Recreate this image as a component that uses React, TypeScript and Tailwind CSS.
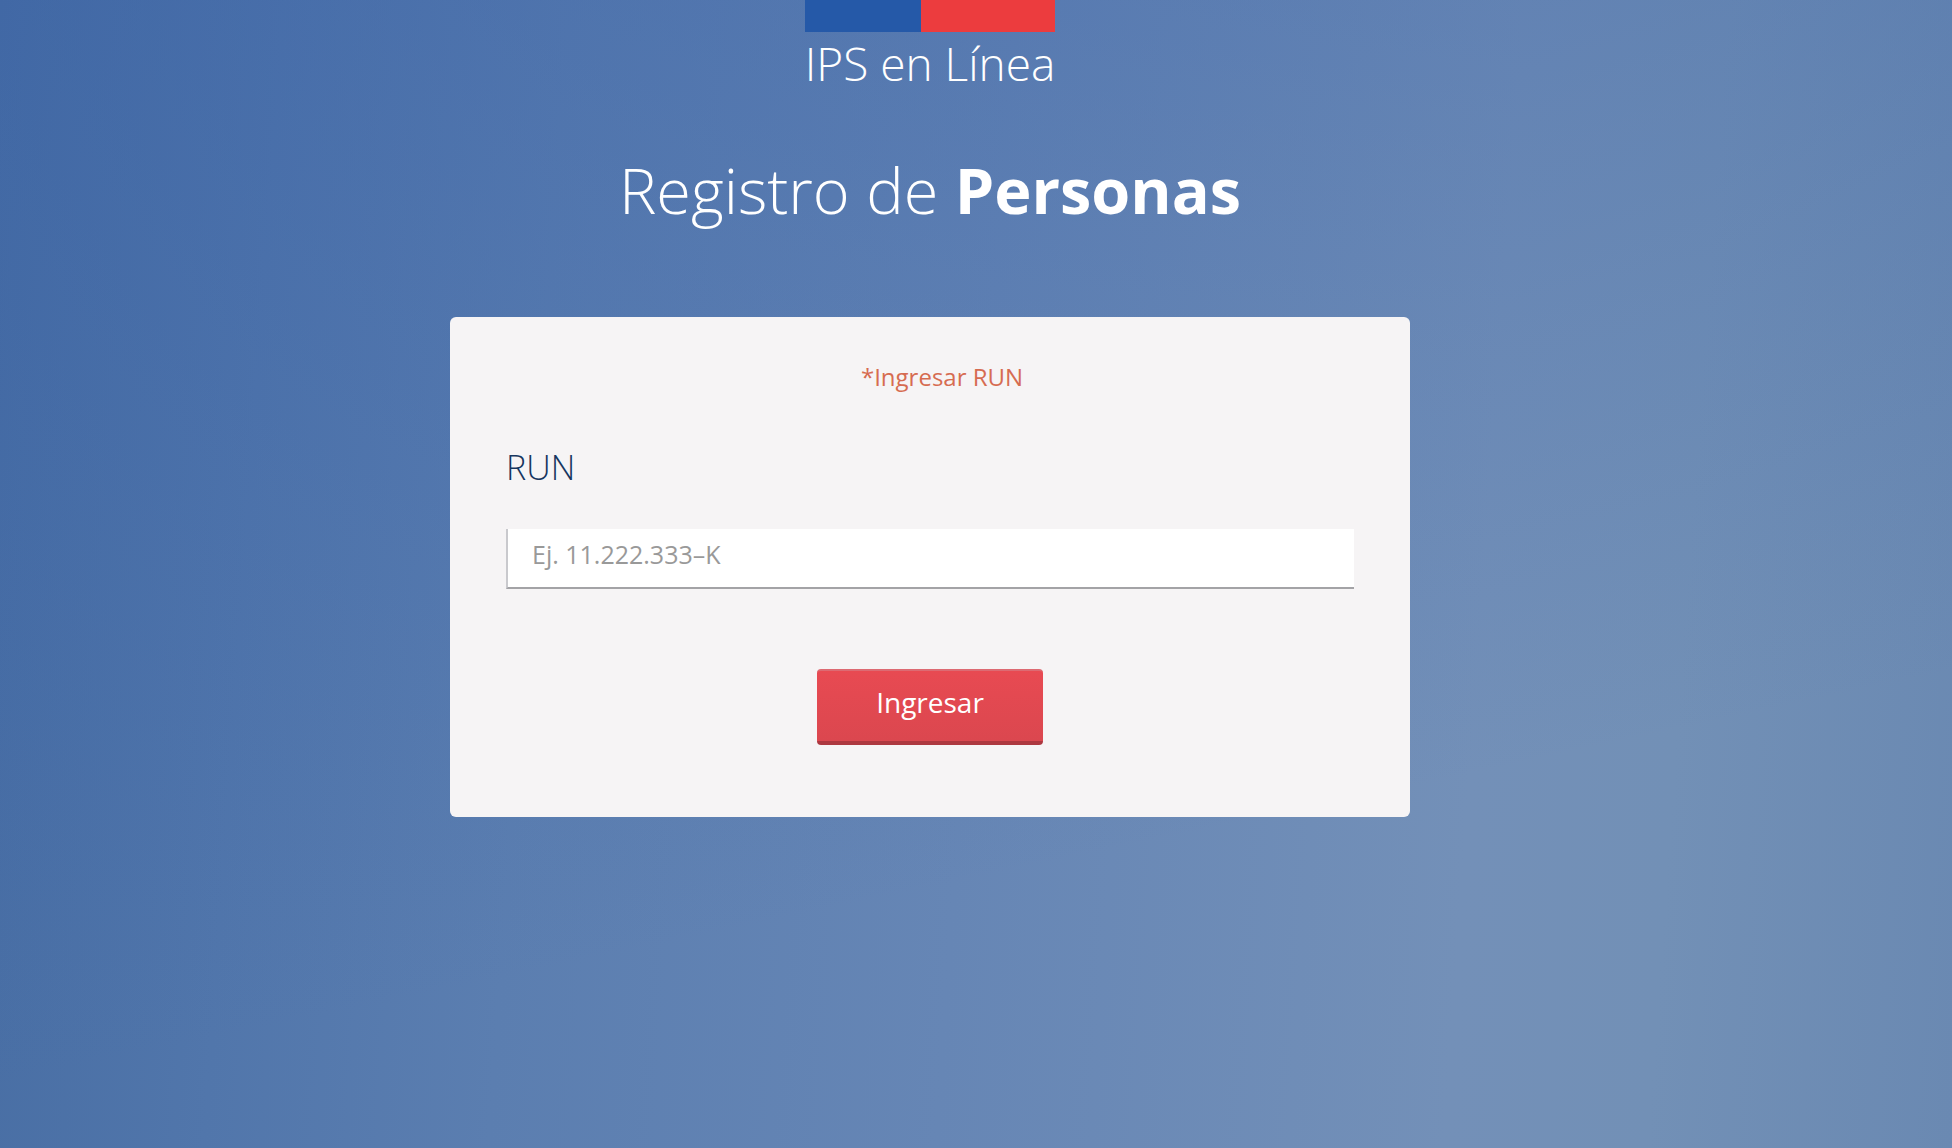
import { FC, FormEvent, useState } from 'react';

const Logo: FC = () => (
  <header className="flex flex-col items-center">
    <div className="flex h-8 w-[250px]">
      <div className="w-[116px] bg-[#2559a8]" />
      <div className="flex-1 bg-[#ec3c3e]" />
    </div>
    <p className="text-[46px] leading-[62px] font-[350]">IPS en Línea</p>
  </header>
);

const RunForm: FC = () => {
  const [run, setRun] = useState('');

  const handleSubmit = (event: FormEvent) => {
    event.preventDefault();
  };

  return (
    <form
      onSubmit={handleSubmit}
      className="mt-[79px] flex w-full max-w-[960px] flex-col rounded-md bg-[#f6f4f5] px-14 pt-11 pb-[72px]"
    >
      <p className="pl-6 text-center text-[24px] leading-8 text-[#d66c51]">
        *Ingresar RUN
      </p>
      <label
        htmlFor="run"
        className="mt-12 text-[34px] leading-[52px] font-[350] text-[#17365f]"
      >
        RUN
      </label>
      <input
        id="run"
        type="text"
        value={run}
        onChange={(event) => setRun(event.target.value)}
        placeholder="Ej. 11.222.333–K"
        className="mt-9 h-[60px] w-full border-b-2 border-l-2 border-b-[#a3a3a6] border-l-[#c9c9cd] bg-white px-6 pb-2 text-[25px] text-gray-700 outline-none placeholder:text-[#999999]"
      />
      <button
        type="submit"
        className="mt-20 h-[76px] self-center rounded-[4px] border-t-2 border-b-4 border-t-[#dd6a72] border-b-[#ad3840] bg-linear-to-b from-[#e84a52] to-[#db474f] px-[59px] pb-2 text-[28px] text-white"
      >
        Ingresar
      </button>
    </form>
  );
};

const App: FC = () => (
  <div className="min-h-screen bg-[linear-gradient(168deg,#3861a866_0%,#3861a800_70%),linear-gradient(94deg,#476da3_0%,#5176ab_14%,#5b7eb0_28%,#6686b5_50%,#7390b8_75%,#7290b6_85%,#6a89b2_100%)] font-['Open_Sans',sans-serif] text-white">
    <main className="flex flex-col items-center pr-[92px]">
      <Logo />
      <h1 className="mt-12 text-[63px] leading-[96px] font-light">
        Registro de <b className="font-bold">Personas</b>
      </h1>
      <RunForm />
    </main>
  </div>
);

export default App;
